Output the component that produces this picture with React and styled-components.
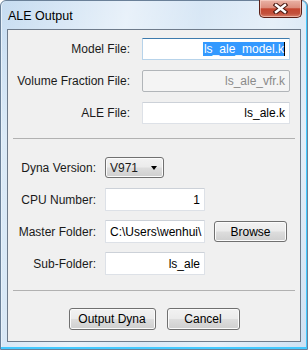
import React from "react";
import styled, { createGlobalStyle } from "styled-components";

const Global = createGlobalStyle`
  html, body { margin: 0; padding: 0; }
  body { width: 308px; height: 350px; overflow: hidden; background: #ffffff; }
  * { box-sizing: border-box; }
`;

const Window = styled.div`
  width: 308px;
  height: 350px;
  display: flex;
  flex-direction: column;
  border: 1px solid #6a8098;
  border-radius: 6px 6px 0 0;
  background:
    linear-gradient(100deg, rgba(255,255,255,0) 0%, rgba(255,255,255,0.6) 35%, rgba(255,255,255,0.3) 55%, rgba(255,255,255,0.55) 75%, rgba(255,255,255,0.1) 100%),
    linear-gradient(180deg, #c6dcf1 0%, #d6e7f6 40%, #c8def2 100%);
  box-shadow: inset 0 -2px 0 #43c9ff, inset -1px 0 0 #43c9ff, inset 1px 0 0 #e8f2fb;
  font-family: "Liberation Sans", Arial, sans-serif;
  color: #1a1a1a;
`;

const TitleBar = styled.div`
  height: 28px;
  display: flex;
  align-items: center;
  padding-left: 7px;
  padding-right: 5px;
`;

const Title = styled.div`
  font-size: 12.5px;
  color: #000;
  padding-top: 1px;
`;

const CloseButton = styled.div`
  margin-left: auto;
  align-self: flex-start;
  margin-top: -1px;
  width: 43px;
  height: 18px;
  border: 1px solid #5a1f17;
  border-top: none;
  border-radius: 0 0 5px 5px;
  background: linear-gradient(180deg, #eab3a6 0%, #dc8e7d 45%, #c4462f 52%, #c3513c 80%, #d8806a 100%);
  box-shadow: inset 0 0 0 1px rgba(255, 220, 210, 0.55);
  display: flex;
  align-items: center;
  justify-content: center;
`;

const Client = styled.div`
  flex: 1;
  margin: 0 6px 7px 6px;
  border: 1px solid #6e7b8b;
  background: #f0f0f0;
  display: flex;
  flex-direction: column;
`;

const TopForm = styled.div`
  display: grid;
  grid-template-columns: 122px 148px;
  grid-auto-rows: 22px;
  column-gap: 12px;
  row-gap: 10px;
  padding-top: 8px;
`;

const BottomForm = styled.div`
  display: grid;
  grid-template-columns: 88px 100px 73px;
  grid-auto-rows: 23px;
  column-gap: 9px;
  row-gap: 9px;
  padding-top: 17px;
  align-items: center;
`;

const Label = styled.label`
  font-size: 12px;
  text-align: right;
  align-self: center;
  white-space: nowrap;
  grid-column: 1;
`;

const Field = styled.div`
  height: ${(p) => p.$h || 22}px;
  display: flex;
  align-items: center;
  justify-content: ${(p) => (p.$left ? "flex-start" : "flex-end")};
  padding: 0 4px;
  font-size: 12px;
  overflow: hidden;
  white-space: nowrap;
  background: ${(p) => (p.$disabled ? "#f4f4f4" : "#ffffff")};
  color: ${(p) => (p.$disabled ? "#8a8a8a" : "#000000")};
  border: 1px solid ${(p) => (p.$disabled ? "#b1b5b9" : p.$focus ? "#b7d3ea" : "#dde1e7")};
  border-top-color: ${(p) => (p.$disabled ? "#b1b5b9" : p.$focus ? "#3d7bad" : "#ccd1d8")};
  border-radius: ${(p) => (p.$disabled ? "2px" : "1px")};
`;

const Selection = styled.span`
  background: #3399ff;
  color: #ffffff;
  line-height: 14px;
  padding: 0 0 0 1px;
  border-right: 1px solid #000;
`;

const Separator = styled.div`
  margin: ${(p) => p.$top}px 5px 0 5px;
  height: 1px;
  background: #b1b1b1;
`;

const Button = styled.button`
  width: ${(p) => p.$w}px;
  height: ${(p) => p.$h || 22}px;
  padding: 0;
  font-family: "Liberation Sans", Arial, sans-serif;
  font-size: 12px;
  color: #000;
  border: 1px solid #707070;
  border-radius: 3px;
  background: linear-gradient(180deg, #f2f2f2 0%, #ebebeb 48%, #dddddd 52%, #cfcfcf 100%);
  box-shadow: inset 0 0 0 1px #fbfbfb;
`;

const Select = styled.div`
  width: 59px;
  height: 21px;
  display: flex;
  align-items: center;
  justify-content: space-between;
  padding: 0 6px 0 4px;
  font-size: 12px;
  border: 1px solid #707070;
  border-radius: 3px;
  background: linear-gradient(180deg, #f2f2f2 0%, #ebebeb 48%, #dddddd 52%, #cfcfcf 100%);
  box-shadow: inset 0 0 0 1px #fbfbfb;
`;

const Arrow = styled.span`
  width: 0;
  height: 0;
  border-left: 3.5px solid transparent;
  border-right: 3.5px solid transparent;
  border-top: 4px solid #000;
`;

const ButtonRow = styled.div`
  display: flex;
  justify-content: center;
  gap: 11px;
  padding-top: 17px;
`;

function CloseGlyph() {
  return (
    <svg width="15" height="11" viewBox="0 0 15 11">
      <g strokeLinecap="square">
        <path d="M3 2 L12 9 M12 2 L3 9" stroke="#4b1a12" strokeWidth="4.6" fill="none" />
        <path d="M3 2 L12 9 M12 2 L3 9" stroke="#ffffff" strokeWidth="2.4" fill="none" />
      </g>
    </svg>
  );
}

export default function App() {
  return (
    <>
      <Global />
      <Window>
        <TitleBar>
          <Title>ALE Output</Title>
          <CloseButton>
            <CloseGlyph />
          </CloseButton>
        </TitleBar>
        <Client>
          <TopForm>
            <Label>Model File:</Label>
            <Field $focus>
              <Selection>ls_ale_model.k</Selection>
            </Field>
            <Label>Volume Fraction File:</Label>
            <Field $disabled>ls_ale_vfr.k</Field>
            <Label>ALE File:</Label>
            <Field>ls_ale.k</Field>
          </TopForm>
          <Separator $top={14} />
          <BottomForm>
            <Label>Dyna Version:</Label>
            <Select>
              <span>V971</span>
              <Arrow />
            </Select>
            <span />
            <Label>CPU Number:</Label>
            <Field $h={23}>1</Field>
            <span />
            <Label>Master Folder:</Label>
            <Field $h={23} $left>C:\Users\wenhui\</Field>
            <Button $w={73} $h={21}>Browse</Button>
            <Label>Sub-Folder:</Label>
            <Field $h={23}>ls_ale</Field>
            <span />
          </BottomForm>
          <Separator $top={15} />
          <ButtonRow>
            <Button $w={87}>Output Dyna</Button>
            <Button $w={73}>Cancel</Button>
          </ButtonRow>
        </Client>
      </Window>
    </>
  );
}
